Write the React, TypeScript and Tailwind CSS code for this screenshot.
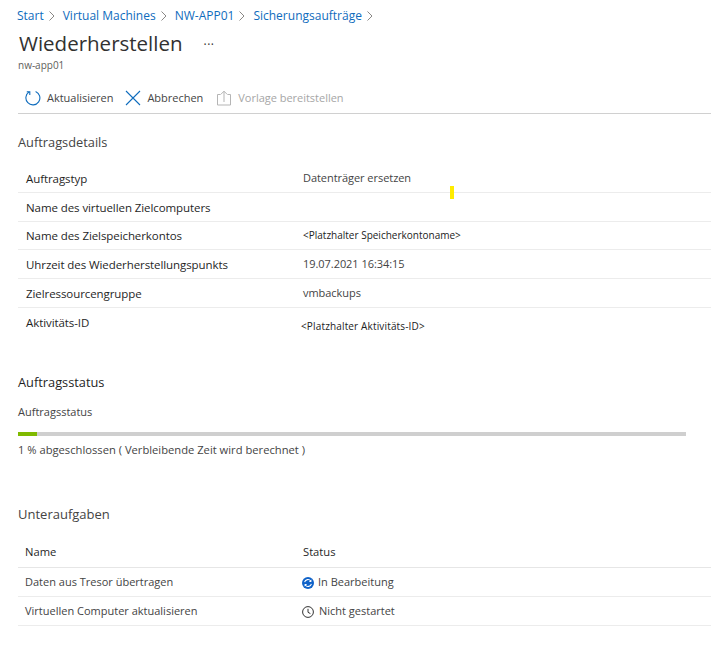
const font = { fontFamily: '"Open Sans", "Noto Sans", sans-serif' };

function Chevron() {
  return (
    <svg width="8" height="12" viewBox="0 0 8 12" fill="none" stroke="#8a8886" strokeWidth="1" className="ml-[4px] mr-[7px] shrink-0">
      <path d="M1.5 1.5 L6 6 L1.5 10.5" />
    </svg>
  );
}

function Refresh() {
  return (
    <svg width="16" height="16" viewBox="0 0 16 16" fill="none" stroke="#0f6cbd" strokeWidth="1.1">
      <path d="M4.2 1.9 A7 7 0 1 0 10.6 1.4" />
      <path d="M1.8 1.9 H4.8 V4.9" />
    </svg>
  );
}

function Cross() {
  return (
    <svg width="16" height="16" viewBox="0 0 16 16" fill="none" stroke="#0f6cbd" strokeWidth="1.1">
      <path d="M1 1 L15 15 M15 1 L1 15" />
    </svg>
  );
}

function Deploy() {
  return (
    <svg width="16" height="16" viewBox="0 0 16 16" fill="none" stroke="#b5b5b5" strokeWidth="1">
      <path d="M4.5 4.5 H1.5 V15 H14.5 V4.5 H11.5" />
      <path d="M8 12 V1.2 M4.8 4.4 L8 1.2 L11.2 4.4" />
    </svg>
  );
}

function Sync() {
  return (
    <svg width="12" height="12" viewBox="0 0 12 12" className="shrink-0">
      <circle cx="6" cy="6" r="6" fill="#0f62c8" />
      <path d="M2.6 5.2 A3.5 3.5 0 0 1 8.8 4 M9.4 6.8 A3.5 3.5 0 0 1 3.2 8" fill="none" stroke="#fff" strokeWidth="1.1" />
      <path d="M9.4 2.4 V5 H6.9 Z M2.6 9.6 V7 H5.1 Z" fill="#fff" />
    </svg>
  );
}

function Clock() {
  return (
    <svg width="12" height="12" viewBox="0 0 12 12" fill="none" stroke="#333" strokeWidth="1" className="shrink-0">
      <circle cx="6" cy="6" r="5.4" />
      <path d="M6 2.8 V6.3 L8.4 7.6" />
    </svg>
  );
}

function Crumb({ label }: { label: string }) {
  return (
    <>
      <span className="text-[#0f6cbd]">{label}</span>
      <Chevron />
    </>
  );
}

function DetailRow({ label, value, small, last }: { label: string; value?: string; small?: boolean; last?: boolean }) {
  return (
    <div className={`flex h-[28.75px] ${last ? "items-start" : "items-center border-b border-[#ececec] pt-[1px]"}`}>
      <div className={`w-[285px] pl-2 text-[11.5px] font-medium tracking-[-0.08px] text-[#1f1f1f] ${last ? "pt-[6px]" : ""}`}>{label}</div>
      <div className={small ? `text-[10px] text-[#222] ${last ? "-ml-[2px] pt-[11px] tracking-[0.15px]" : ""}` : "text-[11px] tracking-[-0.05px] text-[#444]"}>{value}</div>
    </div>
  );
}

export default function App() {
  return (
    <div style={font} className="relative h-[650px] w-[711px] overflow-hidden bg-white pl-[18px] text-[#323130]">
      <nav className="-ml-px flex h-[31px] items-center pt-px text-[12px]">
        <Crumb label="Start" />
        <Crumb label="Virtual Machines" />
        <Crumb label="NW-APP01" />
        <Crumb label="Sicherungsaufträge" />
      </nav>
      <div className="flex h-[25px] items-center pl-px">
        <h1 className="text-[20.5px] leading-[25px] font-medium text-[#323130]">Wiederherstellen</h1>
        <span className="ml-[21px] mt-[2px] text-[12px] leading-none tracking-[0.5px]">···</span>
      </div>
      <div className="mt-[1px] h-[16px] text-[10px] leading-[16px] text-[#605e5c]">nw-app01</div>
      <div className="mt-[8px] flex h-[33px] items-center border-b border-[#d0d0d0] pl-[7px] pt-[1px] text-[11px] tracking-[-0.02px]">
        <Refresh />
        <span className="ml-[6px] mt-[2px] text-[#444]">Aktualisieren</span>
        <span className="ml-[12px] flex"><Cross /></span>
        <span className="ml-[6px] mt-[2px] text-[#444]">Abbrechen</span>
        <span className="ml-[13px] flex"><Deploy /></span>
        <span className="ml-[6px] mt-[2px] text-[#a6a6a6]">Vorlage bereitstellen</span>
      </div>

      <h2 className="mt-[19px] text-[12.8px] leading-[18px] text-[#444]">Auftragsdetails</h2>
      <div className="mt-[13px]">
        <DetailRow label="Auftragstyp" value="Datenträger ersetzen" />
        <DetailRow label="Name des virtuellen Zielcomputers" />
        <DetailRow label="Name des Zielspeicherkontos" value="<Platzhalter Speicherkontoname>" small />
        <DetailRow label="Uhrzeit des Wiederherstellungspunkts" value="19.07.2021 16:34:15" />
        <DetailRow label="Zielressourcengruppe" value="vmbackups" />
        <DetailRow label="Aktivitäts-ID" value="<Platzhalter Aktivitäts-ID>" small last />
      </div>

      <h2 className="mt-[36px] text-[12.8px] leading-[18px] font-medium text-[#1f1f1f]">Auftragsstatus</h2>
      <div className="mt-[13px] text-[11px] leading-[16px] text-[#444]">Auftragsstatus</div>
      <div className="mt-[12px] flex h-1 w-[668px] bg-[#cfcfcf]">
        <div className="w-[19px] bg-[#7fba00]" />
      </div>
      <div className="mt-[6px] text-[11.2px] leading-[16px] text-[#444]">1 % abgeschlossen ( Verbleibende Zeit wird berechnet )</div>

      <h2 className="mt-[47px] text-[13px] leading-[18px] text-[#444]">Unteraufgaben</h2>
      <div className="mt-[14px]">
        <div className="flex h-[31px] items-center border-b border-[#e6e6e6] pt-[2px] text-[11.2px] font-medium text-[#1f1f1f]">
          <div className="w-[285px] pl-[7px]">Name</div>
          <div>Status</div>
        </div>
        <div className="flex h-[29px] items-center border-b border-[#ececec] pt-[2px] text-[11px] text-[#444]">
          <div className="w-[285px] pl-[7px]">Daten aus Tresor übertragen</div>
          <div className="-ml-px flex items-center gap-[4px]"><Sync />In Bearbeitung</div>
        </div>
        <div className="flex h-[29px] items-center border-b border-[#ececec] pt-[2px] text-[11px] text-[#444]">
          <div className="w-[285px] pl-[7px]">Virtuellen Computer aktualisieren</div>
          <div className="-ml-px flex items-center gap-[5px]"><Clock />Nicht gestartet</div>
        </div>
      </div>

      <div className="absolute left-[450px] top-[186px] h-[13px] w-1 bg-[#ffec00]" />
    </div>
  );
}
